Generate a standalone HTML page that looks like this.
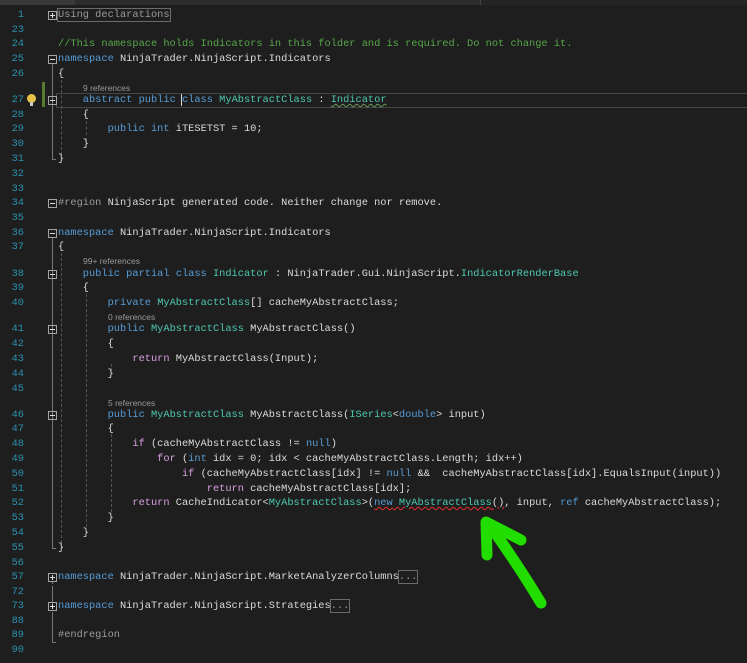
<!DOCTYPE html>
<html><head><meta charset="utf-8"><style>
body{margin:0;width:747px;height:663px;background:#1e1e1e;overflow:hidden;position:relative;font-family:"Liberation Mono",monospace;font-size:10.33px;color:#dcdcdc}
.n{position:absolute;left:0;width:24px;text-align:right;color:#2b91af;line-height:14px}
.c{position:absolute;left:58px;white-space:pre;line-height:14px}
.r{position:absolute;white-space:pre;font-family:"Liberation Sans",sans-serif;font-size:8.5px;color:#999;line-height:10px}
.k{color:#569cd6}.t{color:#4ec9b0}.m{color:#57a64a}.p{color:#d8a0df}.g{color:#9b9b9b}
.box{position:absolute;width:7px;height:7px;border:1px solid #a5a5a5}
.box:after{content:"";position:absolute;left:1px;top:3px;width:5px;height:1px;background:#ddd}
.plus:before{content:"";position:absolute;left:3px;top:1px;width:1px;height:5px;background:#ddd}
.vl{position:absolute;width:1px;background:#777}
.dl{position:absolute;width:0;border-left:1px dashed #555}
.sq{text-decoration:underline wavy #e5302e;text-decoration-thickness:1px}
.sqg{text-decoration:underline wavy #6a9955;text-decoration-thickness:1px}
</style></head><body>
<div style="position:absolute;left:0;top:0;width:747px;height:5px;background:#2d2d30"></div>
<div style="position:absolute;left:0;top:0;width:75px;height:5px;background:#3a3a3d"></div>
<div style="position:absolute;left:480px;top:0;width:267px;height:5px;background:#252526;border-left:1px solid #3f3f46"></div>

<!-- line highlight 27 -->
<div style="position:absolute;left:56px;top:93px;width:700px;height:13px;border:1px solid #464646"></div>
<div style="position:absolute;left:42px;top:82px;width:3px;height:25px;background:#587c2f"></div>
<div style="position:absolute;left:27px;top:94px;width:9px;height:9px;border-radius:50%;background:#e8c34a"></div>
<div style="position:absolute;left:30px;top:102px;width:3px;height:4px;background:#ccc"></div>

<!-- outline lines -->
<div class="vl" style="left:52px;top:64px;height:96px"></div>
<div class="vl" style="left:52px;top:159px;width:4px;height:1px"></div>
<div class="vl" style="left:52px;top:238px;height:311px"></div>
<div class="vl" style="left:52px;top:548px;width:4px;height:1px"></div>
<div class="vl" style="left:52px;top:582px;height:2px"></div>
<div class="vl" style="left:52px;top:586px;height:18px"></div>
<div class="vl" style="left:52px;top:612px;height:31px"></div>
<div class="vl" style="left:52px;top:642px;width:4px;height:1px"></div>
<div class="dl" style="left:61px;top:80px;height:75px"></div>
<div class="dl" style="left:61px;top:253px;height:290px"></div>
<div class="dl" style="left:86px;top:121px;height:20px"></div>
<div class="dl" style="left:86px;top:294px;height:233px"></div>
<div class="dl" style="left:111px;top:364px;height:7px"></div>
<div class="dl" style="left:111px;top:434px;height:78px"></div>

<div class="box plus" style="left:48px;top:11px"></div>
<div class="box" style="left:48px;top:55px"></div>
<div class="box" style="left:48px;top:96px"></div>
<div class="box" style="left:48px;top:199px"></div>
<div class="box" style="left:48px;top:229px"></div>
<div class="box" style="left:48px;top:270px"></div>
<div class="box" style="left:48px;top:325px"></div>
<div class="box" style="left:48px;top:411px"></div>
<div class="box plus" style="left:48px;top:573px"></div>
<div class="box plus" style="left:48px;top:602px"></div>

<div class="n" style="top:8px">1</div><div class="c" style="top:8px"><span class="g" style="outline:1px solid #6b6b6b">Using declarations</span></div>
<div class="n" style="top:23px">23</div>
<div class="n" style="top:37px">24</div><div class="c m" style="top:37px">//This namespace holds Indicators in this folder and is required. Do not change it.</div>
<div class="n" style="top:52px">25</div><div class="c" style="top:52px"><span class="k">namespace</span> NinjaTrader.NinjaScript.Indicators</div>
<div class="n" style="top:67px">26</div><div class="c" style="top:67px">{</div>
<div class="r" style="left:83px;top:83px">9 references</div>
<div class="n" style="top:93px">27</div><div class="c" style="top:93px">    <span class="k">abstract public </span><span style="border-left:1px solid #ddd;margin-left:-1px"></span><span class="k">class</span> <span class="t">MyAbstractClass</span> : <span class="t sqg">Indicator</span></div>
<div class="n" style="top:108px">28</div><div class="c" style="top:108px">    {</div>
<div class="n" style="top:122px">29</div><div class="c" style="top:122px">        <span class="k">public int</span> iTESETST = 10;</div>
<div class="n" style="top:137px">30</div><div class="c" style="top:137px">    }</div>
<div class="n" style="top:152px">31</div><div class="c" style="top:152px">}</div>
<div class="n" style="top:167px">32</div>
<div class="n" style="top:182px">33</div>
<div class="n" style="top:196px">34</div><div class="c" style="top:196px"><span class="g">#region</span> NinjaScript generated code. Neither change nor remove.</div>
<div class="n" style="top:211px">35</div>
<div class="n" style="top:226px">36</div><div class="c" style="top:226px"><span class="k">namespace</span> NinjaTrader.NinjaScript.Indicators</div>
<div class="n" style="top:240px">37</div><div class="c" style="top:240px">{</div>
<div class="r" style="left:83px;top:256px">99+ references</div>
<div class="n" style="top:267px">38</div><div class="c" style="top:267px">    <span class="k">public partial class</span> <span class="t">Indicator</span> : NinjaTrader.Gui.NinjaScript.<span class="t">IndicatorRenderBase</span></div>
<div class="n" style="top:281px">39</div><div class="c" style="top:281px">    {</div>
<div class="n" style="top:296px">40</div><div class="c" style="top:296px">        <span class="k">private</span> <span class="t">MyAbstractClass</span>[] cacheMyAbstractClass;</div>
<div class="r" style="left:108px;top:312px">0 references</div>
<div class="n" style="top:322px">41</div><div class="c" style="top:322px">        <span class="k">public</span> <span class="t">MyAbstractClass</span> MyAbstractClass()</div>
<div class="n" style="top:337px">42</div><div class="c" style="top:337px">        {</div>
<div class="n" style="top:352px">43</div><div class="c" style="top:352px">            <span class="p">return</span> MyAbstractClass(Input);</div>
<div class="n" style="top:367px">44</div><div class="c" style="top:367px">        }</div>
<div class="n" style="top:382px">45</div>
<div class="r" style="left:108px;top:398px">5 references</div>
<div class="n" style="top:408px">46</div><div class="c" style="top:408px">        <span class="k">public</span> <span class="t">MyAbstractClass</span> MyAbstractClass(<span class="t">ISeries</span>&lt;<span class="k">double</span>&gt; input)</div>
<div class="n" style="top:422px">47</div><div class="c" style="top:422px">        {</div>
<div class="n" style="top:437px">48</div><div class="c" style="top:437px">            <span class="p">if</span> (cacheMyAbstractClass != <span class="k">null</span>)</div>
<div class="n" style="top:452px">49</div><div class="c" style="top:452px">                <span class="p">for</span> (<span class="k">int</span> idx = 0; idx &lt; cacheMyAbstractClass.Length; idx++)</div>
<div class="n" style="top:467px">50</div><div class="c" style="top:467px">                    <span class="p">if</span> (cacheMyAbstractClass[idx] != <span class="k">null</span> &amp;&amp;  cacheMyAbstractClass[idx].EqualsInput(input))</div>
<div class="n" style="top:482px">51</div><div class="c" style="top:482px">                        <span class="p">return</span> cacheMyAbstractClass[idx];</div>
<div class="n" style="top:496px">52</div><div class="c" style="top:496px">            <span class="p">return</span> CacheIndicator&lt;<span class="t">MyAbstractClass</span>&gt;(<span class="sq"><span class="k">new</span> <span class="t">MyAbstractClass</span>()</span>, input, <span class="k">ref</span> cacheMyAbstractClass);</div>
<div class="n" style="top:511px">53</div><div class="c" style="top:511px">        }</div>
<div class="n" style="top:526px">54</div><div class="c" style="top:526px">    }</div>
<div class="n" style="top:541px">55</div><div class="c" style="top:541px">}</div>
<div class="n" style="top:556px">56</div>
<div class="n" style="top:570px">57</div><div class="c" style="top:570px"><span class="k">namespace</span> NinjaTrader.NinjaScript.MarketAnalyzerColumns<span class="g" style="outline:1px solid #6b6b6b">...</span></div>
<div class="n" style="top:585px">72</div>
<div class="n" style="top:599px">73</div><div class="c" style="top:599px"><span class="k">namespace</span> NinjaTrader.NinjaScript.Strategies<span class="g" style="outline:1px solid #6b6b6b">...</span></div>
<div class="n" style="top:614px">88</div>
<div class="n" style="top:628px">89</div><div class="c g" style="top:628px">#endregion</div>
<div class="n" style="top:643px">90</div>

<svg style="position:absolute;left:0;top:0" width="747" height="663">
<g stroke="#22dd00" stroke-width="11" stroke-linecap="round" stroke-linejoin="round" fill="none">
<path d="M541 603 Q515 560 488 523"/>
<path d="M487 555 L486 522 L521 540"/>
</g>
</svg>
</body></html>
